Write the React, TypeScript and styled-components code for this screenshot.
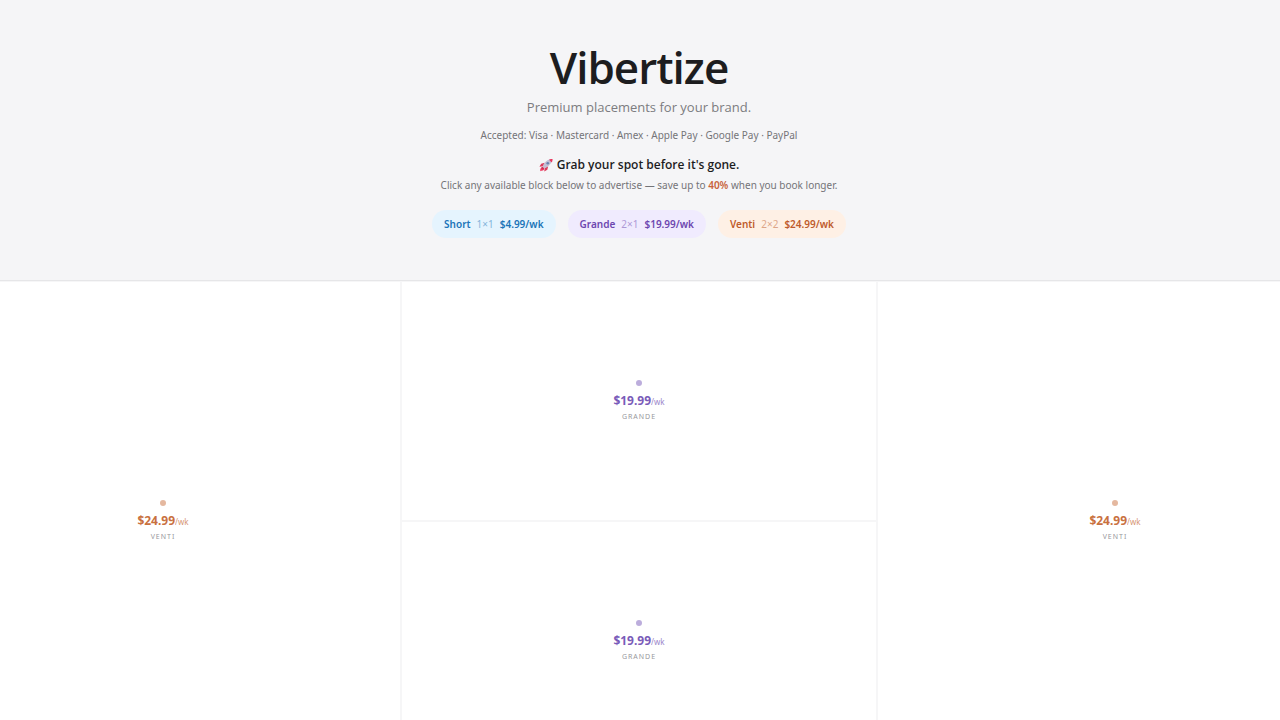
import React from 'react';
import styled, { createGlobalStyle } from 'styled-components';

const GlobalStyle = createGlobalStyle`
  *, *::before, *::after { box-sizing: border-box; }
  body {
    margin: 0;
    background: #ffffff;
    color: #1d1d1f;
    font-family: 'Segoe UI', 'Open Sans', 'Noto Sans', sans-serif;
    overflow-x: hidden;
  }
`;

const Header = styled.header`
  display: flex;
  flex-direction: column;
  align-items: center;
  padding: 39px 26px 42px 24px;
  background: #f5f5f7;
  border-bottom: 1px solid #e6e6e8;
  text-align: center;
`;

const Title = styled.h1`
  margin: 0;
  font-size: 44px;
  line-height: 56px;
  font-weight: 600;
  letter-spacing: -1px;
`;

const Tagline = styled.p`
  margin: 0;
  font-size: 13px;
  line-height: 24px;
  color: #7c7c80;
`;

const Note = styled.p`
  margin: 0;
  font-family: 'Segoe UI', 'Noto Sans', sans-serif;
  font-size: 10px;
  line-height: 20px;
  color: #747478;
`;

const Payments = styled(Note)`
  margin-top: 6px;
`;

const Callout = styled.p`
  display: flex;
  align-items: center;
  gap: 4px;
  margin: 10px 0 0;
  font-size: 12px;
  line-height: 20px;
  font-weight: 600;
`;

const Saving = styled.strong`
  font-weight: 600;
  color: #c8623a;
`;

const Tiers = styled.div`
  display: flex;
  flex-wrap: wrap;
  justify-content: center;
  gap: 12px;
  margin-top: 15px;
`;

const Tier = styled.div<{ $ink: string; $fill: string }>`
  display: flex;
  align-items: center;
  gap: 6px;
  padding: 4px 12px;
  border-radius: 14px;
  background: ${(p) => p.$fill};
  color: ${(p) => p.$ink};
  font-family: 'Segoe UI', 'Noto Sans', sans-serif;
  font-size: 10px;
  line-height: 20px;
  font-weight: 600;
`;

const Size = styled.span`
  font-weight: 400;
  opacity: 0.5;
`;

const Board = styled.main`
  display: grid;
  grid-template-columns: repeat(3, 474px);
  grid-auto-rows: 238px;
  justify-content: center;
  gap: 2px;
  padding: 1px 2px 0 0;
  overflow: hidden;
`;

const Slot = styled.button<{ $tall?: boolean; $ink: string }>`
  grid-row: span ${(p) => (p.$tall ? 2 : 1)};
  display: flex;
  flex-direction: column;
  align-items: center;
  justify-content: center;
  padding: 0;
  border: 0;
  background: #ffffff;
  box-shadow: 0 0 0 2px #f6f6f7;
  color: ${(p) => p.$ink};
  font-family: 'Segoe UI', 'Noto Sans', sans-serif;
  cursor: pointer;
`;

const Dot = styled.span`
  width: 6px;
  height: 6px;
  margin-bottom: 6px;
  border-radius: 50%;
  background: currentColor;
  opacity: 0.5;
`;

const Price = styled.span`
  font-size: 12px;
  line-height: 18px;
  font-weight: 700;
`;

const Period = styled.span`
  font-size: 8px;
  font-weight: 400;
  opacity: 0.75;
`;

const SlotName = styled.span`
  font-size: 7px;
  line-height: 12px;
  letter-spacing: 1px;
  text-transform: uppercase;
  color: #98989d;
`;

const Rocket = () => (
  <svg width="14" height="14" viewBox="0 0 32 32" aria-hidden="true">
    <path d="M13 11 5 13l-4 7 9-1zM21 19l-2 8-7 4 1-9z" fill="#dc3c5c" />
    <path d="M3 30c-1-5 1-9 5-9s5 5 2 7c-2 1-4 1-7 2z" fill="#f03a62" />
    <path d="M8 20C11 12 17 5 25 3l4 4c-2 8-9 14-17 17z" fill="#c3bfd4" />
    <path d="M8 20 12 24l-3 3-4-4z" fill="#cf3358" />
    <path d="M23 4c3-2 6-2 8-2 0 2 0 5-2 8z" fill="#e8375e" />
    <circle cx="20" cy="12" r="3" fill="#6983b0" />
  </svg>
);

const tiers = [
  { name: 'Short', size: '1×1', price: '$4.99/wk', ink: '#1b74b8', fill: '#e5f4fe' },
  { name: 'Grande', size: '2×1', price: '$19.99/wk', ink: '#6d47b0', fill: '#f0ebfe' },
  { name: 'Venti', size: '2×2', price: '$24.99/wk', ink: '#be5c2c', fill: '#fef0e5' },
];

const slots = [
  { name: 'Venti', price: '$24.99', ink: '#c9713f', tall: true },
  { name: 'Grande', price: '$19.99', ink: '#7a5bb9', tall: false },
  { name: 'Venti', price: '$24.99', ink: '#c9713f', tall: true },
  { name: 'Grande', price: '$19.99', ink: '#7a5bb9', tall: false },
];

export default function App() {
  return (
    <>
      <GlobalStyle />
      <Header>
        <Title>Vibertize</Title>
        <Tagline>Premium placements for your brand.</Tagline>
        <Payments>Accepted: Visa · Mastercard · Amex · Apple Pay · Google Pay · PayPal</Payments>
        <Callout>
          <Rocket />
          Grab your spot before it's gone.
        </Callout>
        <Note>
          Click any available block below to advertise — save up to <Saving>40%</Saving> when you book longer.
        </Note>
        <Tiers>
          {tiers.map((t) => (
            <Tier key={t.name} $ink={t.ink} $fill={t.fill}>
              <span>{t.name}</span>
              <Size>{t.size}</Size>
              <span>{t.price}</span>
            </Tier>
          ))}
        </Tiers>
      </Header>
      <Board>
        {slots.map((s, i) => (
          <Slot key={i} type="button" $tall={s.tall} $ink={s.ink}>
            <Dot />
            <Price>
              {s.price}
              <Period>/wk</Period>
            </Price>
            <SlotName>{s.name}</SlotName>
          </Slot>
        ))}
      </Board>
    </>
  );
}
